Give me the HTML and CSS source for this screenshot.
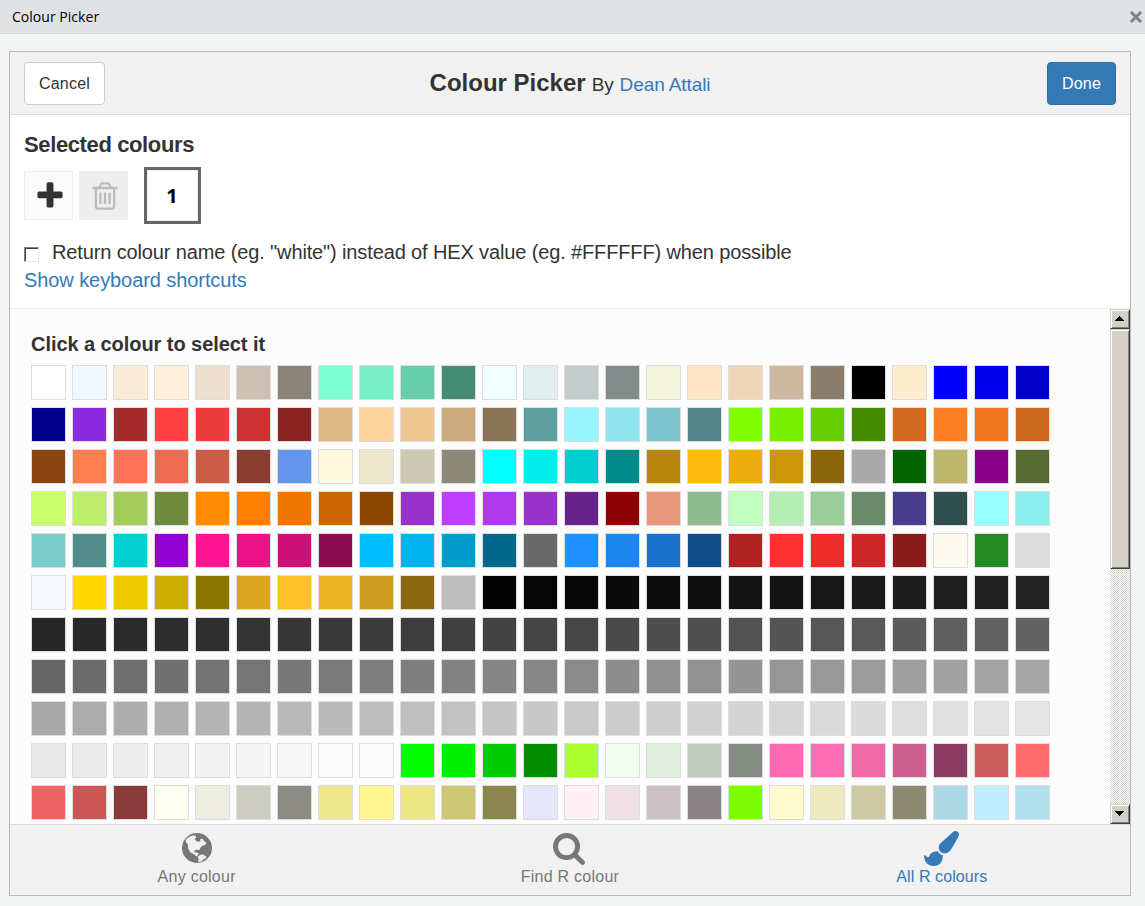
FILE: index.html
```html
<!DOCTYPE html>
<html lang="en">
<head>
<meta charset="utf-8">
<title>Colour Picker</title>
<link rel="stylesheet" href="styles.css">
</head>
<body>
<div class="titlebar">
  <span class="titlebar-text">Colour Picker</span>
  <svg class="close" viewBox="0 0 12 12"><path d="M2 2L10 10M10 2L2 10"/></svg>
</div>
<div class="gadget">
  <header class="header">
    <button class="btn">Cancel</button>
    <h1 class="title"><span class="title-main">Colour Picker</span> <span class="title-by">By</span> <a class="title-author">Dean Attali</a></h1>
    <button class="btn btn-primary">Done</button>
  </header>
  <section class="selected">
    <h2 class="selected-heading"><span>Selected colours</span></h2>
    <div class="tools">
      <div class="tool add"><svg viewBox="0 0 1792 1792"><path d="M1600 736v192q0 40-28 68t-68 28h-416v416q0 40-28 68t-68 28h-192q-40 0-68-28t-28-68v-416h-416q-40 0-68-28t-28-68v-192q0-40 28-68t68-28h416v-416q0-40 28-68t68-28h192q40 0 68 28t28 68v416h416q40 0 68 28t28 68z"/></svg></div>
      <div class="tool remove"><svg viewBox="0 0 1792 1792"><path d="M704 736v576q0 14-9 23t-23 9h-64q-14 0-23-9t-9-23v-576q0-14 9-23t23-9h64q14 0 23 9t9 23zm256 0v576q0 14-9 23t-23 9h-64q-14 0-23-9t-9-23v-576q0-14 9-23t23-9h64q14 0 23 9t9 23zm256 0v576q0 14-9 23t-23 9h-64q-14 0-23-9t-9-23v-576q0-14 9-23t23-9h64q14 0 23 9t9 23zm128 724v-948h-896v948q0 22 7 40.5t14.5 27 10.5 8.5h832q3 0 10.5-8.5t14.5-27 7-40.5zm-672-1076h448l-48-117q-7-9-17-11h-317q-10 2-17 11zm928 32v64q0 14-9 23t-23 9h-96v948q0 83-47 143.5t-113 60.5h-832q-66 0-113-58.5t-47-141.5v-952h-96q-14 0-23-9t-9-23v-64q0-14 9-23t23-9h309l70-167q15-37 54-63t79-26h320q40 0 79 26t54 63l70 167h309q14 0 23 9t9 23z"/></svg></div>
      <div class="slot"><div class="slot-inner">1</div></div>
    </div>
    <label class="option"><span class="checkbox"></span><span class="option-text">Return colour name (eg. "white") instead of HEX value (eg. #FFFFFF) when possible</span></label>
    <a class="shortcuts">Show keyboard shortcuts</a>
  </section>
  <section class="palette">
    <div class="palette-body">
      <h3 class="palette-heading"><span>Click a colour to select it</span></h3>
      <div class="swatches" id="swatches"></div>
    </div>
    <div class="scrollbar">
      <div class="bevel arrow"><svg viewBox="0 0 9 5" shape-rendering="crispEdges"><path d="M4 0h1v1h1v1h1v1h1v1h1v1H0V4h1V3h1V2h1V1h1z"/></svg></div>
      <div class="bevel thumb"></div>
      <div class="track"></div>
      <div class="bevel arrow"><svg viewBox="0 0 9 5" shape-rendering="crispEdges"><path d="M0 0h9v1H8v1H7v1H6v1H5v1H4V4H3V3H2V2H1V1H0z"/></svg></div>
    </div>
  </section>
  <nav class="tabs">
    <a class="tab"><svg class="globe" viewBox="189 68 88 88"><circle class="sea" cx="233" cy="112" r="44"/><path class="land" d="M201 86L210 80L220 75L229 76L231 81L226 85L230 91L236 94L243 92L242 86L249 85L255 92L261 97L256 103L248 106L242 113L240 118L231 117L225 119L226 125L233 125L238 128L236 133L231 137L225 130L214 125L207 113L206 101L200 94zM241 133L248 130L261 137L259 142L251 146L247 151L236 153L238 145L235 138z"/></svg><span>Any colour</span></a>
    <a class="tab"><svg class="search" viewBox="64 128 1664 1664"><path d="M1216 832q0-185-131.500-316.500t-316.500-131.500-316.500 131.500-131.500 316.500 131.500 316.500 316.500 131.500 316.500-131.500 131.500-316.500zm512 832q0 52-38 90t-90 38q-54 0-90-38l-343-342q-179 124-399 124-143 0-273.500-55.500t-225-150-150-225-55.500-273.500 55.500-273.500 150-225 225-150 273.500-55.500 273.500 55.500 225 150 150 225 55.500 273.500q0 220-124 399l343 343q37 37 37 90z"/></svg><span>Find R colour</span></a>
    <a class="tab active"><svg class="brush" viewBox="0 0 1792 1792"><path d="M1615 0q70 0 122.500 46.500t52.500 116.500q0 63-45 151-332 629-465 752-97 91-218 91-126 0-216.500-92.500t-90.500-219.500q0-128 92-212l638-579q59-54 130-54zm-909 1034q39 76 106.500 130t150.500 76l1 71q4 213-129.500 347t-348.500 134q-123 0-218-46.500t-152.500-127.500-86.500-183-29-220q7 5 41 30t62 44.500 59 36.500 46 17q41 0 55-37 25-66 57.500-112.500t69.500-76 88-47.500 103-25.500 125-10.500z"/></svg><span>All R colours</span></a>
  </nav>
</div>
<script src="swatches.js"></script>
</body>
</html>
```
FILE: styles.css
```css
* { box-sizing: border-box; }
body {
  margin: 0;
  height: 906px;
  overflow: hidden;
  display: flex;
  flex-direction: column;
  background: #f3f5f5;
  color: #333;
  font-family: "Liberation Sans", Arial, sans-serif;
  font-size: 16px;
}
h1, h2, h3 { margin: 0; }
a { color: #337ab7; }
.titlebar {
  height: 34px;
  flex: none;
  display: flex;
  align-items: center;
  justify-content: space-between;
  padding: 0 3px 0 12px;
  background: #e0e2e6;
  border-bottom: 1px solid #d6d8dc;
  color: #000;
  font-family: "Open Sans", sans-serif;
  font-size: 14px;
}
.titlebar-text { letter-spacing: 0.03px; }
.close { width: 12px; height: 12px; overflow: visible; }
.close path { fill: none; stroke: #808080; stroke-width: 3; stroke-linecap: square; }
.gadget {
  width: 1122px;
  height: 845px;
  flex: none;
  margin: 17px 0 0 9px;
  border: 1px solid #b6b9b8;
  background: #fff;
  display: flex;
  flex-direction: column;
}
.header {
  height: 63px;
  flex: none;
  display: grid;
  grid-template-columns: 81px 1fr 81px;
  align-items: center;
  padding: 0 14px;
  background: #f1f1f1;
  border-bottom: 1px solid #ddd;
}
.btn {
  height: 43px;
  padding: 2px 0 0;
  border: 1px solid #ccc;
  border-radius: 4px;
  background: #fff;
  color: #333;
  font: 16px "Liberation Sans", Arial, sans-serif;
  letter-spacing: 0.2px;
}
.btn-primary { width: 69px; justify-self: end; background: #337ab7; border-color: #2e6da4; color: #fff; }
.title {
  display: flex;
  justify-content: center;
  align-items: baseline;
  gap: 6px;
  font-size: 19px;
  font-weight: normal;
  letter-spacing: -0.1px;
}
.title-main { font-size: 24px; font-weight: bold; letter-spacing: 0; }
.selected { height: 194px; flex: none; padding: 15px 14px 0; border-bottom: 1px solid #eee; }
.selected-heading { font-size: 22px; line-height: 30px; letter-spacing: -0.38px; }
.tools { display: flex; align-items: center; margin-top: 7px; height: 57px; }
.tool {
  width: 49px;
  height: 49px;
  display: flex;
  align-items: center;
  justify-content: center;
  padding: 1px 0 0 2px;
}
.tool svg { width: 32px; height: 32px; flex: none; }
.add { background: #fafafa; border: 1px solid #eee; fill: #333; margin-right: 6px; }
.remove { background: #eee; fill: #bbb; margin-right: 16px; }
.slot { width: 57px; height: 57px; border: 3px solid #666; }
.slot-inner {
  height: 51px;
  padding-right: 1px;
  border: 1px solid #eee;
  color: #000;
  font: bold 20px/49px "Open Sans", sans-serif;
  text-align: center;
}
.option { display: flex; align-items: center; height: 28px; margin-top: 14px; font-size: 20px; letter-spacing: -0.13px; }
.checkbox {
  width: 15px;
  height: 15px;
  margin: 4px 13px 0 0;
  border: 1px solid;
  border-color: #808080 #e8e5de #e8e5de #808080;
  box-shadow: inset 1px 1px 0 #404040;
}
.shortcuts { display: block; width: max-content; font-size: 20px; line-height: 28px; letter-spacing: -0.08px; }
.palette { flex: 1; min-height: 0; display: flex; background: #fcfcfc; }
.palette-body { flex: 1; padding: 20px 0 0 21px; }
.palette-heading { font-size: 20px; line-height: 30px; letter-spacing: -0.06px; }
.swatches {
  display: grid;
  grid-template-columns: repeat(25, 35px);
  grid-auto-rows: 35px;
  gap: 7px 6px;
  margin-top: 6px;
}
.swatch { border: 1px solid #ddd; }
.scrollbar { width: 20px; display: flex; flex-direction: column; }
.bevel {
  background: #d4d0c8;
  border: 1px solid;
  border-color: #d4d0c8 #404040 #404040 #d4d0c8;
  box-shadow: inset 1px 1px 0 #fff, inset -1px -1px 0 #808080;
}
.arrow { height: 20px; display: flex; padding: 6px 0 0 4px; }
.arrow svg { width: 9px; height: 5px; }
.thumb { height: 240px; }
.track { flex: 1; background: repeating-conic-gradient(#d4d0c8 0 25%, #fff 0 50%) 0 0 / 2px 2px; }
.tabs {
  height: 71px;
  flex: none;
  display: grid;
  grid-template-columns: repeat(3, 1fr);
  background: #f1f1f1;
  border-top: 1px solid #ddd;
}
.tab {
  display: flex;
  flex-direction: column;
  align-items: center;
  padding-top: 6px;
  color: #777;
  fill: #777;
  line-height: 20px;
}
.tab span { letter-spacing: 0.25px; }
.active { color: #337ab7; fill: #337ab7; padding-right: 3px; }
.active span { letter-spacing: 0.1px; }
.globe { width: 30px; height: 30px; margin: 2px 0 4px 1px; }
.search { width: 32px; height: 32px; margin: 2px 2px 2px 0; }
.brush { width: 35px; height: 35px; margin-bottom: 1px; }
.land { fill: #f1f1f1; }
```
FILE: swatches.js
```js
const range = (from, to) => {
  const out = [];
  for (let n = from; n <= to; n++) {
    // gray41 is the same colour as dimgray
    if (n === 41) continue;
    const v = n === 50 ? 127 : Math.round(n * 2.55);
    out.push(v.toString(16).padStart(2, "0").repeat(3));
  }
  return out;
};

const named = (text) => text.trim().split(/\s+/);

const colours = [
  ...named(`
FFFFFF F0F8FF FAEBD7 FFEFDB EEDFCC CDC0B0 8B8378 7FFFD4 76EEC6 66CDAA 458B74 F0FFFF E0EEEE C1CDCD 838B8B F5F5DC FFE4C4 EED5B7 CDB79E 8B7D6B 000000 FFEBCD 0000FF 0000EE 0000CD
00008B 8A2BE2 A52A2A FF4040 EE3B3B CD3333 8B2323 DEB887 FFD39B EEC591 CDAA7D 8B7355 5F9EA0 98F5FF 8EE5EE 7AC5CD 53868B 7FFF00 76EE00 66CD00 458B00 D2691E FF7F24 EE7621 CD661D
8B4513 FF7F50 FF7256 EE6A50 CD5B45 8B3E2F 6495ED FFF8DC EEE8CD CDC8B1 8B8878 00FFFF 00EEEE 00CDCD 008B8B B8860B FFB90F EEAD0E CD950C 8B6508 A9A9A9 006400 BDB76B 8B008B 556B2F
CAFF70 BCEE68 A2CD5A 6E8B3D FF8C00 FF7F00 EE7600 CD6600 8B4500 9932CC BF3EFF B23AEE 9A32CD 68228B 8B0000 E9967A 8FBC8F C1FFC1 B4EEB4 9BCD9B 698B69 483D8B 2F4F4F 97FFFF 8DEEEE
79CDCD 528B8B 00CED1 9400D3 FF1493 EE1289 CD1076 8B0A50 00BFFF 00B2EE 009ACD 00688B 696969 1E90FF 1C86EE 1874CD 104E8B B22222 FF3030 EE2C2C CD2626 8B1A1A FFFAF0 228B22 DCDCDC
F8F8FF FFD700 EEC900 CDAD00 8B7500 DAA520 FFC125 EEB422 CD9B1D 8B6914 BEBEBE`),
  ...range(1, 99),
  ...named(`
00FF00 00EE00 00CD00 008B00 ADFF2F F0FFF0 E0EEE0 C1CDC1 838B83 FF69B4 FF6EB4 EE6AA7 CD6090 8B3A62 CD5C5C FF6A6A
EE6363 CD5555 8B3A3A FFFFF0 EEEEE0 CDCDC1 8B8B83 F0E68C FFF68F EEE685 CDC673 8B864E E6E6FA FFF0F5 EEE0E5 CDC1C5 8B8386 7CFC00 FFFACD EEE9BF CDC9A5 8B8970 ADD8E6 BFEFFF B2DFEE`),
];

const grid = document.getElementById("swatches");
for (const c of colours) {
  const cell = document.createElement("div");
  cell.className = "swatch";
  cell.style.backgroundColor = "#" + c;
  grid.appendChild(cell);
}
```
